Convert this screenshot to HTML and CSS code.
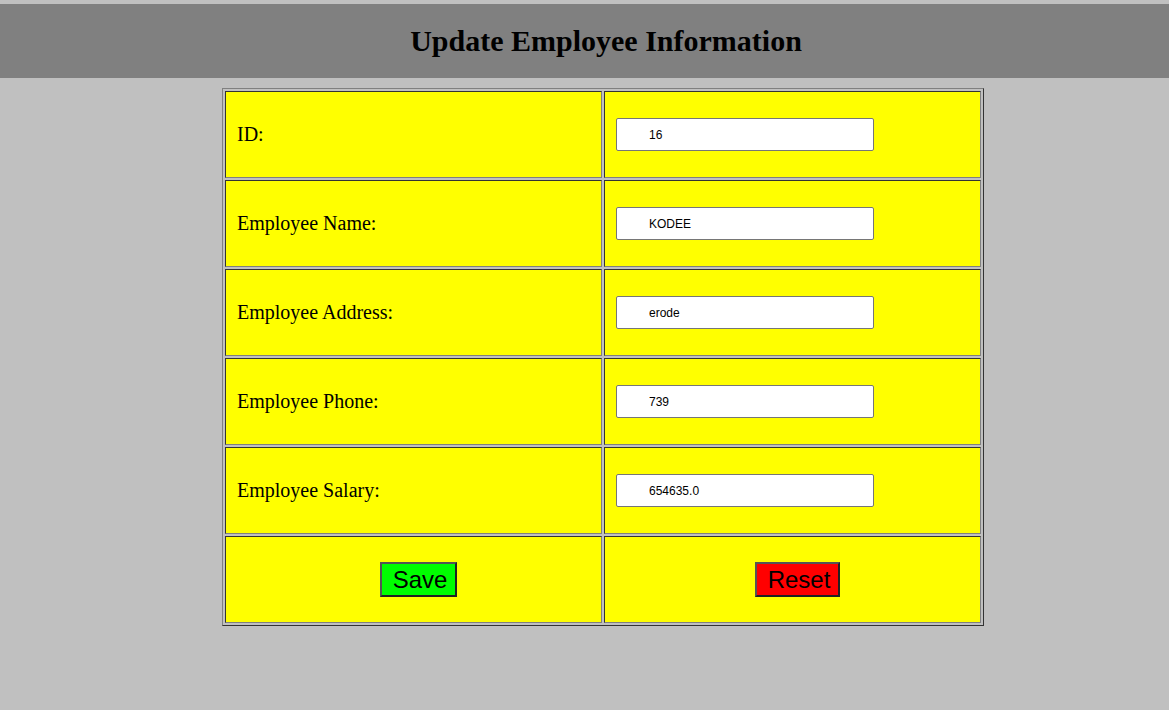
FILE: index.html
```html
<!DOCTYPE html>
<html>
<head>
<meta charset="utf-8">
<title>Update Employee Information</title>
<link rel="stylesheet" href="styles.css">
</head>
<body>
<header class="banner"><h1 class="title">Update Employee Information</h1></header>
<main class="wrap">
<table class="form-table">
<tr><td class="label">ID:</td><td class="field"><input class="inp" type="text" value="16"></td></tr>
<tr><td class="label">Employee Name:</td><td class="field"><input class="inp" type="text" value="KODEE"></td></tr>
<tr><td class="label">Employee Address:</td><td class="field"><input class="inp" type="text" value="erode"></td></tr>
<tr><td class="label">Employee Phone:</td><td class="field"><input class="inp" type="text" value="739"></td></tr>
<tr><td class="label">Employee Salary:</td><td class="field"><input class="inp" type="text" value="654635.0"></td></tr>
<tr><td class="btn-cell"><button class="btn save">Save</button></td><td class="btn-cell"><button class="btn reset">Reset</button></td></tr>
</table>
</main>
</body>
</html>
```

FILE: styles.css
```css
html, body {
  margin: 0;
  padding: 0;
  background: #c0c0c0;
  font-family: "Liberation Serif", "Times New Roman", serif;
}
.banner {
  margin-top: 4px;
  height: 74px;
  background: #808080;
  display: flex;
  align-items: center;
  justify-content: center;
  padding-left: 43px;
}
.title {
  margin: 0;
  font-size: 30px;
  font-weight: bold;
  color: #000;
}
.wrap {
  padding-top: 10px;
  padding-left: 222px;
}
.form-table {
  width: 762px;
  border-collapse: separate;
  border-spacing: 2px;
  border: 1px solid;
  border-color: #808080 #333 #333 #808080;
}
.form-table td {
  width: 50%;
  height: 85px;
  padding: 0 1px 0 11px;
  background: #ffff00;
  border: 1px solid;
  border-color: #333 #808080 #808080 #333;
  font-size: 20px;
  vertical-align: middle;
}
.inp {
  box-sizing: border-box;
  width: 258px;
  height: 33px;
  padding: 0 0 0 32px;
  margin: 0;
  border: 1px solid #767676;
  border-radius: 2px;
  background: #fff;
  font-family: "Liberation Sans", Arial, sans-serif;
  font-size: 12px;
  color: #000;
  display: block;
}
.btn-cell {
  text-align: center;
}
.btn {
  box-sizing: border-box;
  height: 35px;
  padding: 0 8px 0 11px;
  border: 2px solid;
  border-color: #555 #222 #222 #555;
  font-family: "Liberation Sans", Arial, sans-serif;
  font-size: 24px;
  color: #000;
  line-height: 31px;
}
.save { background: #00ff00; }
.reset { background: #ff0000; }
```
